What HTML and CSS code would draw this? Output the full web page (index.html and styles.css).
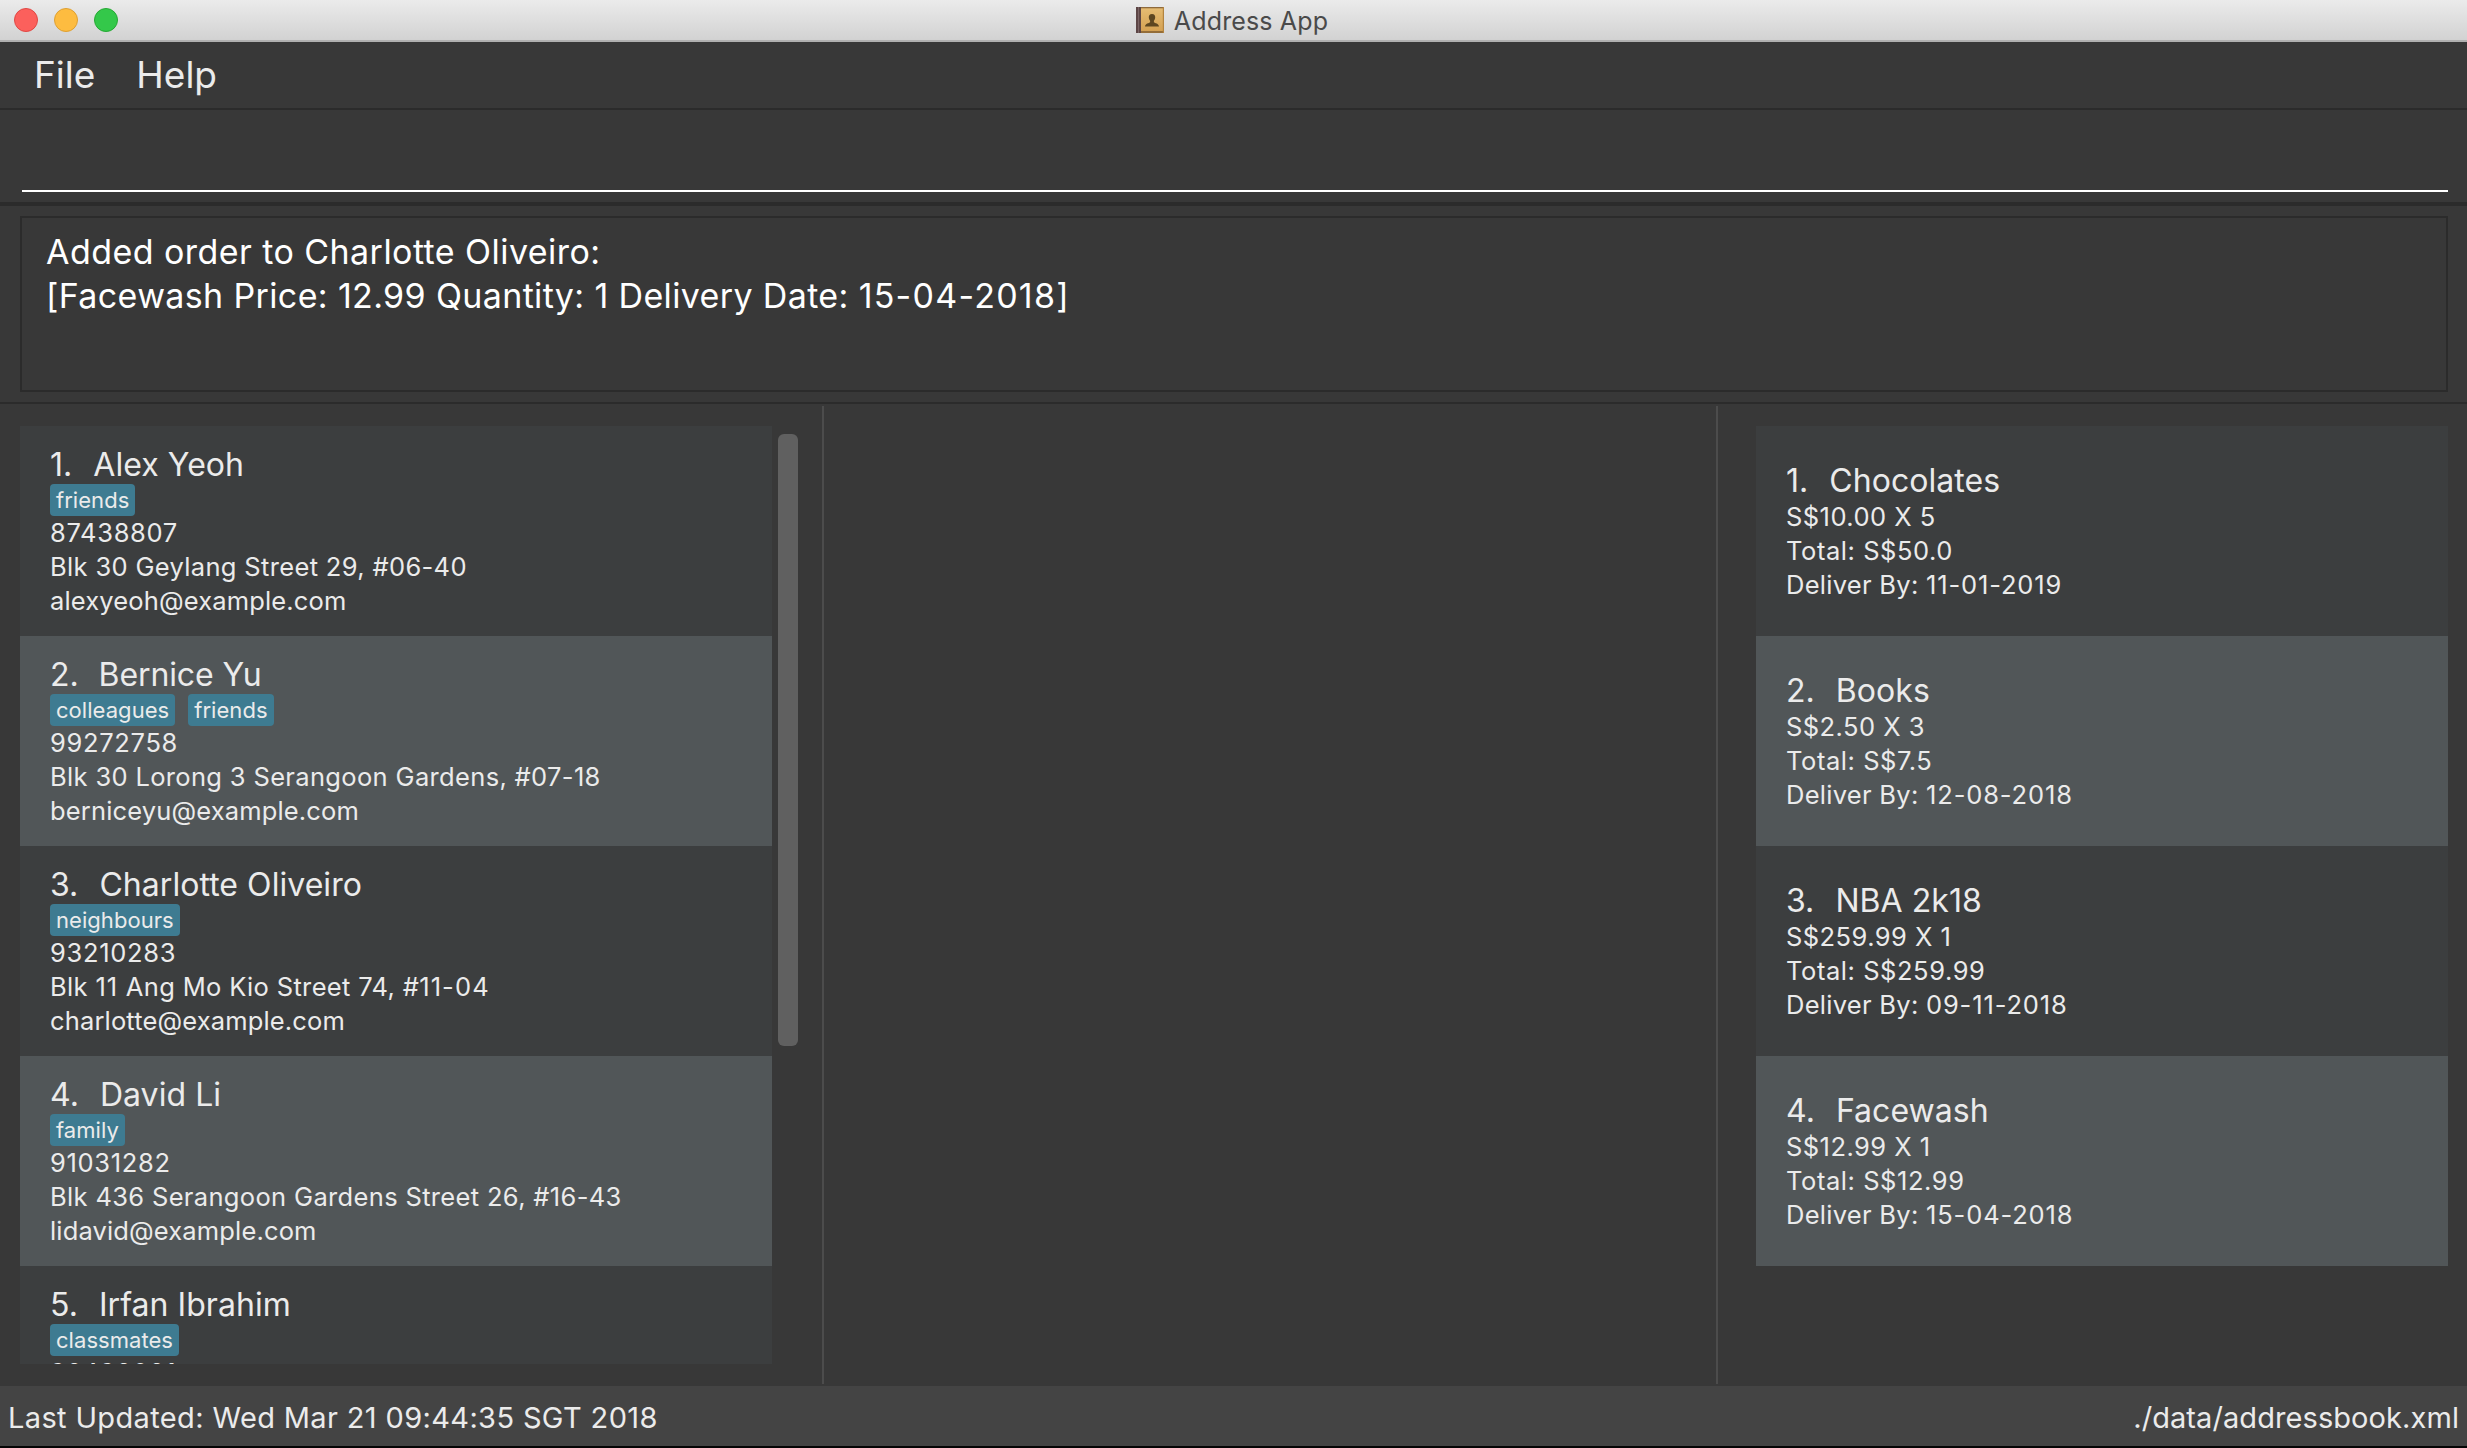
FILE: index.html
```html
<!DOCTYPE html>
<html lang="en">
<head>
<meta charset="utf-8">
<title>Address App</title>
<link rel="stylesheet" href="styles.css">
</head>
<body>
<div class="window">
  <header class="titlebar">
    <div class="lights"><span class="light red"></span><span class="light yellow"></span><span class="light green"></span></div>
    <div class="title">
      <svg class="book" width="30" height="28" viewBox="0 0 30 28">
        <defs><linearGradient id="cover" x1="0" y1="0" x2="0" y2="1"><stop offset="0" stop-color="#e6bd74"/><stop offset="1" stop-color="#d39f50"/></linearGradient></defs>
        <rect x="1" y="1" width="28" height="26" rx="1" fill="url(#cover)"/>
        <rect x="1" y="1" width="28" height="1.3" fill="#8e6a3c"/>
        <rect x="1" y="25" width="28" height="2" fill="#946d38"/>
        <rect x="27.8" y="1" width="1.2" height="26" fill="#b3843f"/>
        <rect x="1" y="1" width="5" height="26" fill="#5c4545"/>
        <rect x="3" y="1" width="1" height="26" fill="#7b6464"/>
        <path d="M17 8c2.300 0 3.400 1.500 3.200 3.600-.1 1.600-.8 2.600-1.300 3.200v1.400c1 1 4.900 1.100 5.100 4.300H10c.2-3.200 4.100-3.300 5.100-4.300v-1.400c-.5-.6-1.200-1.600-1.300-3.200C13.600 9.500 14.700 8 17 8z" fill="#5d4620"/>
      </svg>
      <span class="title-text">Address App</span>
    </div>
  </header>
  <nav class="menubar"><span>File</span><span>Help</span></nav>
  <section class="command"><div class="command-field"></div></section>
  <section class="result"><div class="result-box"><p>Added order to Charlotte Oliveiro:</p><p class="detail">[Facewash Price: 12.99 Quantity: 1 Delivery Date: <span class="num">15-04-2018</span>]</p></div></section>
  <main class="panes">
    <section class="people">
      <ul class="list">
        <li class="card"><h2 class="name"><span>1.</span><span>Alex Yeoh</span></h2><div class="tags"><span class="tag">friends</span></div><p class="phone">87438807</p><p class="address">Blk 30 Geylang Street 29, #06-40</p><p class="email">alexyeoh@example.com</p></li>
        <li class="card"><h2 class="name"><span>2.</span><span>Bernice Yu</span></h2><div class="tags"><span class="tag">colleagues</span><span class="tag">friends</span></div><p class="phone">99272758</p><p class="address">Blk 30 Lorong 3 Serangoon Gardens, #07-18</p><p class="email">berniceyu@example.com</p></li>
        <li class="card"><h2 class="name"><span>3.</span><span>Charlotte Oliveiro</span></h2><div class="tags"><span class="tag">neighbours</span></div><p class="phone">93210283</p><p class="address">Blk <span class="num">11</span> Ang Mo Kio Street 74, #<span class="num">11-04</span></p><p class="email">charlotte@example.com</p></li>
        <li class="card"><h2 class="name"><span>4.</span><span>David Li</span></h2><div class="tags"><span class="tag">family</span></div><p class="phone">91031282</p><p class="address">Blk 436 Serangoon Gardens Street 26, #16-43</p><p class="email">lidavid@example.com</p></li>
        <li class="card"><h2 class="name"><span>5.</span><span>Irfan Ibrahim</span></h2><div class="tags"><span class="tag">classmates</span></div><p class="phone">92492021</p></li>
      </ul>
      <div class="scrollbar"><div class="thumb"></div></div>
    </section>
    <section class="browser"></section>
    <section class="orders">
      <ul class="list">
        <li class="card"><h2 class="name"><span>1.</span><span>Chocolates</span></h2><p class="price">S$10.00 X 5</p><p>Total: S$50.0</p><p class="delivery">Deliver By: <span class="num">11-01-2019</span></p></li>
        <li class="card"><h2 class="name"><span>2.</span><span>Books</span></h2><p class="price">S$2.50 X 3</p><p>Total: S$7.5</p><p class="delivery">Deliver By: <span class="num">12-08-2018</span></p></li>
        <li class="card"><h2 class="name"><span>3.</span><span>NBA 2k18</span></h2><p class="price">S$259.99 X 1</p><p>Total: S$259.99</p><p class="delivery">Deliver By: <span class="num">09-11-2018</span></p></li>
        <li class="card"><h2 class="name"><span>4.</span><span>Facewash</span></h2><p class="price">S$12.99 X 1</p><p>Total: S$12.99</p><p class="delivery">Deliver By: <span class="num">15-04-2018</span></p></li>
      </ul>
    </section>
  </main>
  <footer class="status"><span class="updated">Last Updated: Wed Mar 21 09:44:35 SGT 2018</span><span class="path">./data/addressbook.xml</span></footer>
</div>
</body>
</html>
```

FILE: styles.css
```css
* { box-sizing: border-box; margin: 0; padding: 0; }
body { background: #000; font-family: Inter, "Liberation Sans", sans-serif; color: #ebebeb; }
.window { width: 2467px; height: 1448px; display: flex; flex-direction: column; background: #383838; border-bottom: 2px solid #050505; overflow: hidden; }

.titlebar { position: relative; height: 42px; display: flex; align-items: center; justify-content: center; background: linear-gradient(#ebebeb, #d2d2d2); border-bottom: 2px solid #b0b0b0; }
.lights { position: absolute; left: 14px; top: 8px; display: flex; gap: 16px; }
.light { width: 24px; height: 24px; border-radius: 50%; border: 1px solid; }
.red { background: #fc605c; border-color: #e04844; }
.yellow { background: #fdbc40; border-color: #dea032; }
.green { background: #34c84a; border-color: #26a934; }
.title { display: flex; align-items: center; gap: 9px; padding-right: 4px; }
.title-text { font-size: 25px; line-height: 40px; letter-spacing: .15px; color: #4a4a4a; padding-top: 1px; }

.menubar { height: 68px; display: flex; gap: 41px; padding: 0 34px; border-bottom: 2px solid #2b2b2b; font-size: 37px; line-height: 66px; }
.command { height: 96px; padding: 0 19px 0 22px; border-bottom: 4px solid #2b2b2b; }
.command-field { height: 82px; border-bottom: 2px solid #fff; }
.result { height: 198px; padding: 10px 19px 10px 20px; border-bottom: 2px solid #2b2b2b; }
.result-box { height: 176px; border: 2px solid #2b2b2b; padding: 12px 24px; font-size: 34px; line-height: 44px; letter-spacing: .44px; color: #fff; }
.detail { letter-spacing: .36px; }
.detail .num { letter-spacing: 1.25px; }

.panes { flex: 1; display: grid; grid-template-columns: 822px 896px 1fr; padding: 2px 0; }
.people { display: flex; padding: 20px 0 20px 20px; min-height: 0; }
.people .list { width: 752px; height: 938px; overflow: hidden; }
.scrollbar { padding: 8px 0 0 6px; }
.thumb { width: 20px; height: 612px; border-radius: 6px; background: #606060; }
.browser { border: solid #4c4c4c; border-width: 0 2px; }
.orders { padding: 20px 19px 20px 38px; }

.list { list-style: none; }
.card { height: 210px; padding: 20px 30px; background: #3c3e3f; font-size: 25.5px; line-height: 34px; white-space: nowrap; }
.card:nth-child(even) { background: #515658; }
.phone { letter-spacing: .68px; }
.address { letter-spacing: .34px; }
.address .num { letter-spacing: 1.1px; }
.email { letter-spacing: .15px; }
.orders .card { padding-top: 36px; letter-spacing: .56px; }
.orders .price { letter-spacing: .45px; }
.orders .delivery { letter-spacing: .28px; }
.delivery .num { letter-spacing: .86px; }
.card .name { display: flex; gap: 21px; font-weight: 400; font-size: 32px; line-height: 38px; letter-spacing: .05px; }
.people .card:nth-child(2) .name { gap: 20px; letter-spacing: -.1px; }
.tags { display: flex; gap: 13px; height: 32px; }
.tag { height: 32px; padding: 0 6px; border-radius: 4px; background: #3e7b91; font-size: 22px; line-height: 33px; letter-spacing: .05px; }

.status { height: 60px; display: flex; justify-content: space-between; padding: 0 8px; background: #444; font-size: 29px; line-height: 63px; }
.updated { letter-spacing: .36px; }
.path { letter-spacing: .08px; }
```
